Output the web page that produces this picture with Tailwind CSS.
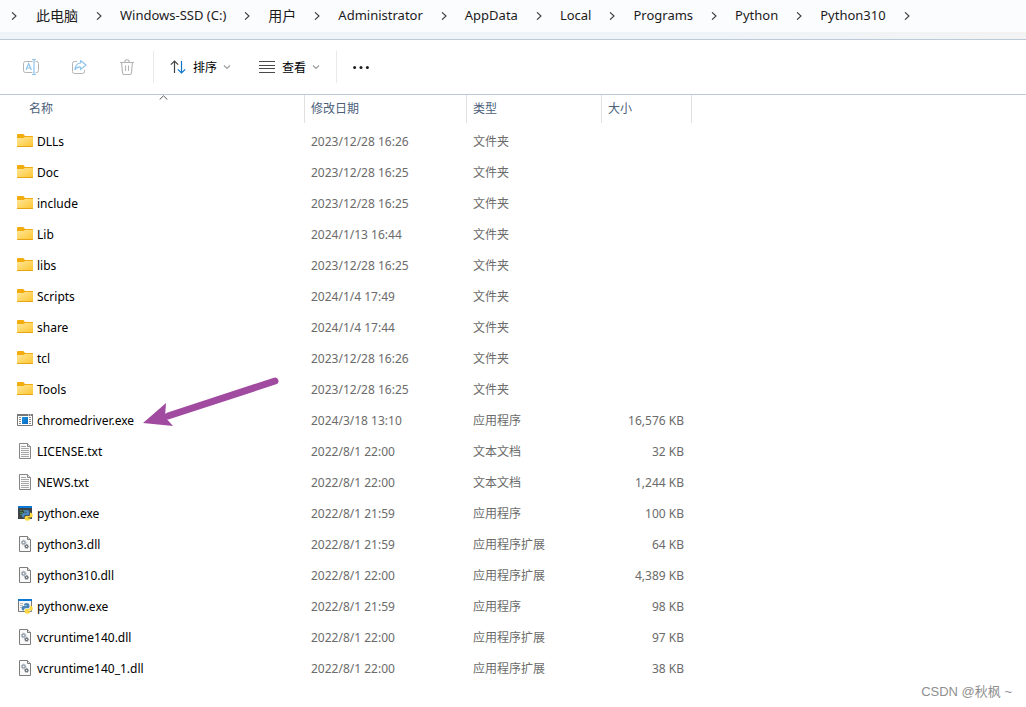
<!DOCTYPE html>
<html lang="zh-CN">
<head>
<meta charset="utf-8">
<title>Python310</title>
<script src="https://cdn.jsdelivr.net/npm/@tailwindcss/browser@4"></script>
</head>
<body class="relative min-h-screen overflow-x-hidden bg-white font-['Noto_Sans','Noto_Sans_CJK_SC',sans-serif] text-xs text-black">

<svg class="absolute size-0" aria-hidden="true">
  <defs>
    <linearGradient id="fold" x1="0" y1="0" x2="1" y2="1"><stop offset="0" stop-color="#ffe69a"/><stop offset="1" stop-color="#fdc62f"/></linearGradient>
    <linearGradient id="blue" x1="0" y1="0" x2="1" y2="1"><stop offset="0" stop-color="#1b93e4"/><stop offset="1" stop-color="#0a68bd"/></linearGradient>
  </defs>
  <symbol id="chev" viewBox="0 0 8 8"><path d="M2 .3 6 4 2 7.7" fill="none" stroke="#3c3c3c" stroke-width="1.1"/></symbol>
  <symbol id="down" viewBox="0 0 8 8"><path d="M1 2.5 4 5.5 7 2.5" fill="none" stroke="#9a9a9a" stroke-width="1.1"/></symbol>
  <symbol id="folder" viewBox="0 0 16 16">
    <path d="M0 2Q0 1 1 1H6.4L8 3H15.5Q16 3 16 3.6V8H0Z" fill="#f2ac0d"/>
    <path d="M0 5H6.4L8 4H16V13.4Q16 14 15.4 14H.6Q0 14 0 13.4Z" fill="url(#fold)"/>
    <path d="M.2 13.5H15.8" stroke="#e8a50f"/>
  </symbol>
  <symbol id="app" viewBox="0 0 16 16">
    <path d="M.5 2.5H15.5V13.5H.5Z" fill="#fff" stroke="#777"/>
    <path d="M0 2H16V4H0Z" fill="#777"/><path d="M11 3H12M13 3H14" stroke="#fff"/>
    <path d="M5 5H11V12H5Z" fill="url(#blue)"/>
    <path d="M2 5.5H4M2 7.5H4M2 9.5H4M2 11.5H4M12 5.5H14M12 7.5H14M12 9.5H14M12 11.5H14" stroke="#8d8d8d"/>
  </symbol>
  <symbol id="txt" viewBox="0 0 16 16">
    <path d="M2.5.5H10.5L13.5 3.5V15.5H2.5Z" fill="#fafafa" stroke="#868686"/>
    <path d="M10.5.5V3.5H13.5" fill="#ddd" stroke="#868686"/>
    <path d="M4 3.5H9M4 5.5H12M4 7.5H12M4 9.5H12M4 11.5H12M4 13.5H12" stroke="#a6a6a6"/>
  </symbol>
  <symbol id="snake" viewBox="0 0 16 16">
    <path d="M7 6.6Q7 5 9.6 5 12.4 5 12.4 6.8V9Q12.4 10.3 11 10.3H8.4Q7 10.3 7 12.4H6.3Q4.6 12.4 4.6 10.2 4.6 8 6.4 8H9.6V7.4H7Z" fill="#4a86b8"/>
    <path d="M13 7.8H14Q15.8 8.4 15.8 10.6 15.8 12.6 14.2 12.6H10.8V13.2H13.2V14Q13.2 15.8 10.4 15.8 7.6 15.8 7.6 14V12.4Q7.6 10.9 9.2 10.9H11.6Q13 10.9 13 9.4Z" fill="#ffd93d"/>
  </symbol>
  <symbol id="py" viewBox="0 0 16 16">
    <path d="M1 1H15V14H1Z" fill="#404346"/><path d="M1 1H15V3H1Z" fill="#0a78d4"/>
    <path d="M3 5.5H5M6 5.5H9M3 7.5H6M3 9.5H5" stroke="#3f8c46"/><use href="#snake"/>
  </symbol>
  <symbol id="pyw" viewBox="0 0 16 16">
    <path d="M1.5 1.5H14.5V13.5H1.5Z" fill="#f7f7f7" stroke="#777"/><path d="M1 1H15V3H1Z" fill="#0a78d4"/>
    <path d="M3 5.5H6M3 7.5H6M3 9.5H5" stroke="#bbb"/><use href="#snake"/>
  </symbol>
  <symbol id="dll" viewBox="0 0 16 16">
    <path d="M2.5.5H10.5L13.5 3.5V15.5H2.5Z" fill="#fafafa" stroke="#7c7c7c"/>
    <path d="M10.5.5V3.5H13.5" fill="#ddd" stroke="#7c7c7c"/>
    <circle cx="6.6" cy="6.6" r="1.5" fill="#fff" stroke="#9aa4ae" stroke-width="1.5"/>
    <circle cx="6.6" cy="6.6" r="2.4" fill="none" stroke="#9aa4ae" stroke-width=".9" stroke-dasharray="1 .88"/>
    <circle cx="9.6" cy="10.4" r="1.2" fill="#fff" stroke="#6d7378" stroke-width="1.2"/>
    <circle cx="9.6" cy="10.4" r="2" fill="none" stroke="#6d7378" stroke-width=".8" stroke-dasharray=".9 .67"/>
  </symbol>
</svg>

<header class="border-b border-[#bccad8] bg-[#eff4f8]">
  <nav id="crumbs" aria-label="路径" class="flex h-8 items-center bg-[#fbfcfe] pl-2 text-[13px] whitespace-nowrap text-[#1b1b1b]"></nav>
  <div class="h-[7px] bg-linear-to-r from-[#eff4f8] from-70% to-[#f3f3f3]"></div>
</header>

<div role="toolbar" aria-label="命令" class="flex h-[55px] items-center border-b border-[#bccad8] pl-[15px]">
  <button aria-label="重命名" class="flex w-12 justify-start pl-2">
    <svg class="size-4" viewBox="0 0 16 16" fill="none"><path d="M9.5 2.5H2.5Q.5 2.5 .5 4.5V11.5Q.5 13.5 2.5 13.5H9.5M12.5 2.5H13.5Q15.5 2.5 15.5 4.5V11.5Q15.5 13.5 13.5 13.5H12.5" stroke="#b4b4b4"/><path d="M3 11 5.7 4.5 8.4 11M4 9H7.4M11 .5V15.5M9 .5H13M9 15.5H13" stroke="#8fc4ec" stroke-width="1.2"/></svg>
  </button>
  <button aria-label="共享" class="flex w-12 justify-start pl-2">
    <svg class="size-4" viewBox="0 0 16 16" fill="none"><path d="M6 2.5H3.5Q1.5 2.5 1.5 4.5V12.5Q1.5 14.5 3.5 14.5H11.5Q13.5 14.5 13.5 12.5V11" stroke="#b4b4b4"/><path d="M9.5 1.5 15 6 9.5 10.5V8Q6 7.6 4 10.8 4.2 4.6 9.5 4Z" stroke="#8fc4ec" stroke-width="1.2" stroke-linejoin="round"/></svg>
  </button>
  <button aria-label="删除" class="flex w-12 justify-start pl-2">
    <svg class="size-4" viewBox="0 0 16 16" fill="none" stroke="#b4b4b4" stroke-width="1.1"><path d="M1 3.5H15M5.8 3.5Q5.8.8 8 .8 10.2.8 10.2 3.5M2.5 3.5 3.6 14Q3.8 15.5 5 15.5H11Q12.2 15.5 12.4 14L13.5 3.5M6.5 6.5V12M9.5 6.5V12"/></svg>
  </button>
  <div class="-ml-1.5 h-8 w-px bg-[#e9e9e9]"></div>
  <button class="ml-4 flex items-center gap-[7px]">
    <svg class="size-4" viewBox="0 0 16 16" fill="none" stroke-width="1.2"><path d="M4.5 14V2M.8 5.7 4.5 2 8.2 5.7" stroke="#444"/><path d="M11.5 2V14M7.8 10.3 11.5 14 15.2 10.3" stroke="#0f75cc"/></svg>
    <span class="pt-px">排序</span><svg class="-ml-px size-2"><use href="#down"/></svg>
  </button>
  <button class="ml-7 flex items-center gap-[7px]">
    <svg class="size-4" viewBox="0 0 16 16" stroke="#4a4a4a"><path d="M0 2.5H16M0 6.5H16M0 9.5H16M0 13.5H16"/></svg>
    <span class="pt-px">查看</span><svg class="-ml-px size-2"><use href="#down"/></svg>
  </button>
  <div class="ml-4 h-8 w-px bg-[#e9e9e9]"></div>
  <button aria-label="更多" class="ml-4">
    <svg class="size-4" viewBox="0 0 16 16" fill="#1f1f1f"><circle cx="1.6" cy="8.5" r="1.5"/><circle cx="8" cy="8.5" r="1.5"/><circle cx="14.4" cy="8.5" r="1.5"/></svg>
  </button>
</div>

<main>
  <table class="w-full table-fixed text-left">
    <colgroup><col class="w-[305px]"><col class="w-[162px]"><col class="w-[135px]"><col class="w-[90px]"><col></colgroup>
    <thead class="text-[#4c607a]">
      <tr class="h-[31px] align-top">
        <th class="p-0 font-normal"><div class="relative h-7 border-r border-[#e0e0e0] pt-1.5 pl-[29px]">名称
          <svg class="absolute top-0 left-[159px] h-[5px] w-[9px]" viewBox="0 0 9 5"><path d="M.7 4.5 4.5.8 8.3 4.5" fill="none" stroke="#555"/></svg></div></th>
        <th class="p-0 font-normal"><div class="h-7 border-r border-[#e0e0e0] pt-1.5 pl-1.5">修改日期</div></th>
        <th class="p-0 font-normal"><div class="h-7 border-r border-[#e0e0e0] pt-1.5 pl-1.5">类型</div></th>
        <th class="p-0 font-normal"><div class="h-7 border-r border-[#e0e0e0] pt-1.5 pl-1.5">大小</div></th>
        <td></td>
      </tr>
    </thead>
    <tbody id="files" class="text-[#6b6b6b]"></tbody>
  </table>
</main>

<svg class="pointer-events-none absolute top-[375px] left-[142px] h-[54px] w-[138px]" viewBox="0 0 138 54" aria-hidden="true">
  <path d="M133 6 26 41" stroke="#a14ba0" stroke-width="7" stroke-linecap="round"/>
  <path d="M1 48 24 28 23 42 31 51Z" fill="#a14ba0"/>
</svg>
<p class="absolute right-[14px] bottom-[7px] font-['Liberation_Sans','Noto_Sans_CJK_SC',sans-serif] text-[13px] text-[#8f8f8f]">CSDN @秋枫 ~</p>

<script>
const chev = '<span class="flex w-[42px] shrink-0 justify-center"><svg class="size-2"><use href="#chev"/></svg></span>';
document.getElementById('crumbs').innerHTML =
  '<span class="flex w-7 shrink-0 pl-0.5"><svg class="size-2"><use href="#chev"/></svg></span>' +
  ['此电脑','Windows-SSD (C:)','用户','Administrator','AppData','Local','Programs','Python','Python310']
    .map(t => '<a href="#" class="' + (/[a-z]/.test(t) ? 'shrink-0' : 'shrink-0 text-sm') + '">' + t + '</a>' + chev).join('');
const D = '文件夹', A = '应用程序', T = '文本文档', L = '应用程序扩展';
const rows = [
  ['folder','DLLs','2023/12/28 16:26',D,''],['folder','Doc','2023/12/28 16:25',D,''],['folder','include','2023/12/28 16:25',D,''],
  ['folder','Lib','2024/1/13 16:44',D,''],['folder','libs','2023/12/28 16:25',D,''],['folder','Scripts','2024/1/4 17:49',D,''],
  ['folder','share','2024/1/4 17:44',D,''],['folder','tcl','2023/12/28 16:26',D,''],['folder','Tools','2023/12/28 16:25',D,''],
  ['app','chromedriver.exe','2024/3/18 13:10',A,'16,576 KB'],['txt','LICENSE.txt','2022/8/1 22:00',T,'32 KB'],
  ['txt','NEWS.txt','2022/8/1 22:00',T,'1,244 KB'],['py','python.exe','2022/8/1 21:59',A,'100 KB'],
  ['dll','python3.dll','2022/8/1 21:59',L,'64 KB'],['dll','python310.dll','2022/8/1 22:00',L,'4,389 KB'],
  ['pyw','pythonw.exe','2022/8/1 21:59',A,'98 KB'],['dll','vcruntime140.dll','2022/8/1 22:00',L,'97 KB'],
  ['dll','vcruntime140_1.dll','2022/8/1 22:00',L,'38 KB']];
document.getElementById('files').innerHTML = rows.map(([i, n, d, t, s]) =>
  '<tr class="h-[31px]"><td class="p-0"><a href="#" class="flex items-center gap-1 pl-[17px] text-black"><svg class="mb-0.5 size-4 shrink-0"><use href="#' + i + '"/></svg>' + n +
  '</a></td><td class="p-0 pl-1.5">' + d + '</td><td class="p-0 pl-1.5">' + t + '</td><td class="p-0 pr-2 text-right">' + s + '</td><td></td></tr>').join('');
</script>
</body>
</html>
